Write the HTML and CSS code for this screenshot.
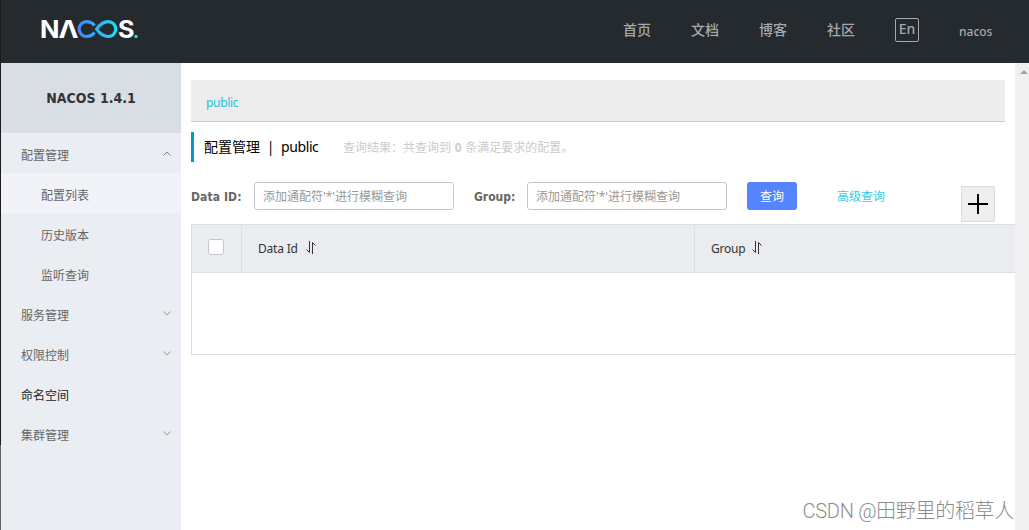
FILE: index.html
```html
<!DOCTYPE html>
<html lang="zh-CN">
<head>
    <meta charset="UTF-8">
    <meta name="viewport" content="width=device-width, initial-scale=1.0">
    <title>Nacos</title>
    <link rel="stylesheet" href="styles.css">
</head>
<body>
    <div class="edge"></div>
    <div class="app">
        <header class="header">
            <svg class="logo" width="106" height="40" viewBox="-4 -8 106 40">
                <defs>
                    <linearGradient id="loop" gradientUnits="userSpaceOnUse" x1="37" y1="0" x2="77" y2="0">
                        <stop offset="0" stop-color="#4485ff"/>
                        <stop offset="1" stop-color="#1be1f6"/>
                    </linearGradient>
                </defs>
                <g class="logo-text">
                    <text x="-1" y="20" textLength="19.500" lengthAdjust="spacingAndGlyphs">N</text>
                    <text x="17.500" y="20" textLength="20" lengthAdjust="spacingAndGlyphs">Λ</text>
                    <text x="77" y="20" textLength="16.500" lengthAdjust="spacingAndGlyphs">S</text>
                </g>
                <g fill="none" stroke="url(#loop)" stroke-width="3.200">
                    <path d="M53.500 7.600C51.500 5 49 3.700 45.500 3.700a7.400 7.400 0 0 0 0 14.800c3.500 0 6-1.300 8-3.900"/>
                    <path d="M55.700 11.100C58.500 7 62 3.700 67.400 3.700a7.400 7.400 0 0 1 0 14.800c-5.400 0-8.900-3.300-11.700-7.400z"/>
                </g>
                <circle cx="95" cy="18.500" r="1.700" fill="#1be1f6"/>
            </svg>
            <nav class="nav">
                <a>首页</a>
                <a>文档</a>
                <a>博客</a>
                <a>社区</a>
                <span class="lang">En</span>
                <span class="user">nacos</span>
            </nav>
        </header>

        <div class="body">
            <aside class="sidebar">
                <div class="version">NACOS 1.4.1</div>
                <ul class="menu">
                    <li>配置管理<svg class="arrow" width="8" height="5" viewBox="0 0 8 5"><path d="M.5 4.500 4 1l3.500 3.500" stroke="#5a8ac0"/></svg></li>
                    <li class="sub active">配置列表</li>
                    <li class="sub">历史版本</li>
                    <li class="sub">监听查询</li>
                    <li>服务管理<svg class="arrow" width="8" height="5" viewBox="0 0 8 5"><path d="M.5.5 4 4 7.500.5" stroke="#b08a80"/></svg></li>
                    <li>权限控制<svg class="arrow" width="8" height="5" viewBox="0 0 8 5"><path d="M.5.5 4 4 7.500.5" stroke="#b08a80"/></svg></li>
                    <li class="dark">命名空间</li>
                    <li>集群管理<svg class="arrow" width="8" height="5" viewBox="0 0 8 5"><path d="M.5.5 4 4 7.500.5" stroke="#b08a80"/></svg></li>
                </ul>
            </aside>

            <main class="main">
                <div class="namespace"><span>public</span></div>
                <div class="title">
                    <span class="title-name">配置管理</span>
                    <span class="title-sep">|</span>
                    <span class="title-ns">public</span>
                    <span class="result">查询结果：共查询到 <b>0</b> 条满足要求的配置。</span>
                </div>
                <div class="search">
                    <label class="label-id">Data ID:</label>
                    <div class="input">添加通配符'*'进行模糊查询</div>
                    <label class="label-group">Group:</label>
                    <div class="input">添加通配符'*'进行模糊查询</div>
                    <button class="query">查询</button>
                    <a class="advanced">高级查询</a>
                    <button class="add">
                        <svg width="20" height="20" viewBox="0 0 20 20"><path d="M0 10h20M10 0v20" stroke="#000" stroke-width="2"/></svg>
                    </button>
                </div>
                <div class="table">
                    <div class="thead">
                        <div class="th check"><span class="checkbox"></span></div>
                        <div class="th data-id">Data Id
                            <svg class="sort" width="11" height="13" viewBox="0 0 11 13"><path d="M3.500 0v11.500L.5 8.500M6.500 13V1.500l3 3"/></svg>
                        </div>
                        <div class="th">Group
                            <svg class="sort" width="11" height="13" viewBox="0 0 11 13"><path d="M3.500 0v11.500L.5 8.500M6.500 13V1.500l3 3"/></svg>
                        </div>
                    </div>
                    <div class="tbody"></div>
                </div>
            </main>

            <div class="scrollbar"><span class="scroll-up"></span></div>
        </div>
    </div>
    <div class="watermark">CSDN @田野里的稻草人</div>
</body>
</html>
```
FILE: styles.css
```css
* {
    box-sizing: border-box;
}
body {
    display: flex;
    height: 530px;
    margin: 0;
    overflow: hidden;
    background: #fff;
    color: #333;
    font-family: "Noto Sans", "Noto Sans CJK SC", sans-serif;
    font-size: 12px;
}
.edge {
    width: 1px;
    background: linear-gradient(#1d1b1e 445px, #666 445px);
}
.app {
    flex: 1;
    min-width: 0;
    display: flex;
    flex-direction: column;
}

/* header */
.header {
    height: 63px;
    flex: none;
    display: flex;
    justify-content: space-between;
    background: #252a2f;
}
.logo {
    margin: 10px 0 0 36px;
}
.logo-text {
    fill: #fff;
    font-family: Inter, sans-serif;
    font-size: 24px;
    font-weight: 700;
}
.nav {
    display: flex;
    align-items: center;
    padding: 0 37px 3px 0;
    color: #a6a9ab;
    font-size: 14px;
    font-weight: 500;
}
.nav a {
    width: 28px;
    margin: -2px 40px 0 0;
    white-space: nowrap;
}
.nav a:first-child {
    margin-left: -1px;
}
.lang {
    width: 24px;
    height: 24px;
    border: 1px solid #a6a9ab;
    border-radius: 2px;
    line-height: 20px;
    text-align: center;
}
.user {
    width: 33px;
    margin: 2px 0 0 40px;
    font-size: 12px;
}

.body {
    flex: 1;
    display: flex;
    min-height: 0;
}

/* sidebar */
.sidebar {
    width: 180px;
    flex: none;
    background: #eaedf2;
}
.version {
    height: 70px;
    background: #d9dde4;
    font-family: "DejaVu Sans Condensed", "DejaVu Sans", sans-serif;
    font-stretch: condensed;
    font-size: 14px;
    font-weight: bold;
    line-height: 70px;
    text-align: center;
}
.menu {
    margin: 0;
    padding: 0;
    list-style: none;
}
.menu li {
    display: flex;
    justify-content: space-between;
    height: 40px;
    padding: 0 10px 0 20px;
    color: #666;
    line-height: 46px;
}
.menu .sub {
    padding-left: 40px;
}
.menu .active {
    background: #f1f3f8;
}
.menu .dark {
    color: #222;
}
.arrow {
    margin-top: 18px;
    fill: none;
}

/* content */
.main {
    flex: 1;
    min-width: 0;
    padding: 17px 0 0 10px;
}
.namespace {
    height: 42px;
    margin-right: 10px;
    padding-left: 15px;
    background: #ededed;
    border-bottom: 1px solid #ccc;
    color: #1bc0dd;
    letter-spacing: -0.3px;
    line-height: 45px;
}
.title {
    display: flex;
    height: 30px;
    margin-top: 10px;
    padding-left: 10px;
    border-left: 3px solid #09c;
    color: #000;
    font-size: 14px;
    line-height: 30px;
    white-space: nowrap;
}
.title-sep {
    width: 21px;
    text-align: center;
}
.title-ns {
    width: 62px;
    letter-spacing: -0.4px;
}
.result {
    color: #ccc;
    font-size: 12px;
    line-height: 32px;
    word-spacing: 0.6px;
}
.search {
    display: flex;
    height: 42px;
    margin: 20px 10px 0 0;
    line-height: 30px;
}
.search label {
    color: #666;
    font-family: "DejaVu Sans Condensed", "DejaVu Sans", sans-serif;
    font-stretch: condensed;
    font-weight: bold;
    white-space: nowrap;
}
.label-id {
    width: 63px;
    letter-spacing: 0.1px;
}
.label-group {
    width: 53px;
    margin-left: 20px;
}
.input {
    width: 200px;
    height: 28px;
    padding: 0 8px;
    border: 1px solid #c4c6cf;
    border-radius: 3px;
    color: #999;
    line-height: 28px;
}
.query {
    width: 50px;
    height: 28px;
    margin-left: 20px;
    padding: 2px 0 0;
    border: 0;
    border-radius: 3px;
    background: #5584ff;
    color: #fff;
    font: inherit;
    line-height: 26px;
}
.advanced {
    margin-left: 40px;
    color: #33cde5;
}
.add {
    display: flex;
    align-items: center;
    justify-content: center;
    width: 34px;
    height: 36px;
    margin: 4px 10px 0 auto;
    padding: 0;
    border: 1px solid #ddd;
    background: #eee;
}
.table {
    height: 131px;
    border-left: 1px solid #dcdee3;
    border-bottom: 1px solid #dcdee3;
}
.thead {
    display: flex;
    height: 49px;
    border-top: 1px solid #dcdee3;
    border-bottom: 1px solid #dcdee3;
    background: #ebecf0;
}
.th {
    display: flex;
    align-items: center;
    padding-left: 16px;
    border-left: 1px solid #dcdee3;
    letter-spacing: -0.2px;
}
.th.check {
    width: 49px;
    border-left: 0;
}
.th.data-id {
    width: 453px;
}
.checkbox {
    width: 16px;
    height: 16px;
    margin-top: -3px;
    border: 1px solid #c4c6cf;
    border-radius: 3px;
    background: #fff;
}
.sort {
    margin: -2px 0 0 8px;
    fill: none;
    stroke: #333;
}
.th:last-child .sort {
    margin-left: 6px;
}

.scrollbar {
    width: 14px;
    flex: none;
    background: #f0f0f0;
}
.scroll-up {
    display: block;
    width: 0;
    margin: 7px 0 0 5px;
    border: 4px solid transparent;
    border-top: 0;
    border-bottom-color: #a3a3a3;
}
.watermark {
    position: absolute;
    right: 15px;
    bottom: 4px;
    color: #8c8c8c;
    font-family: Roboto, "Noto Sans CJK SC", sans-serif;
    font-size: 20px;
    font-weight: 300;
    letter-spacing: -0.3px;
    line-height: 30px;
}
```
